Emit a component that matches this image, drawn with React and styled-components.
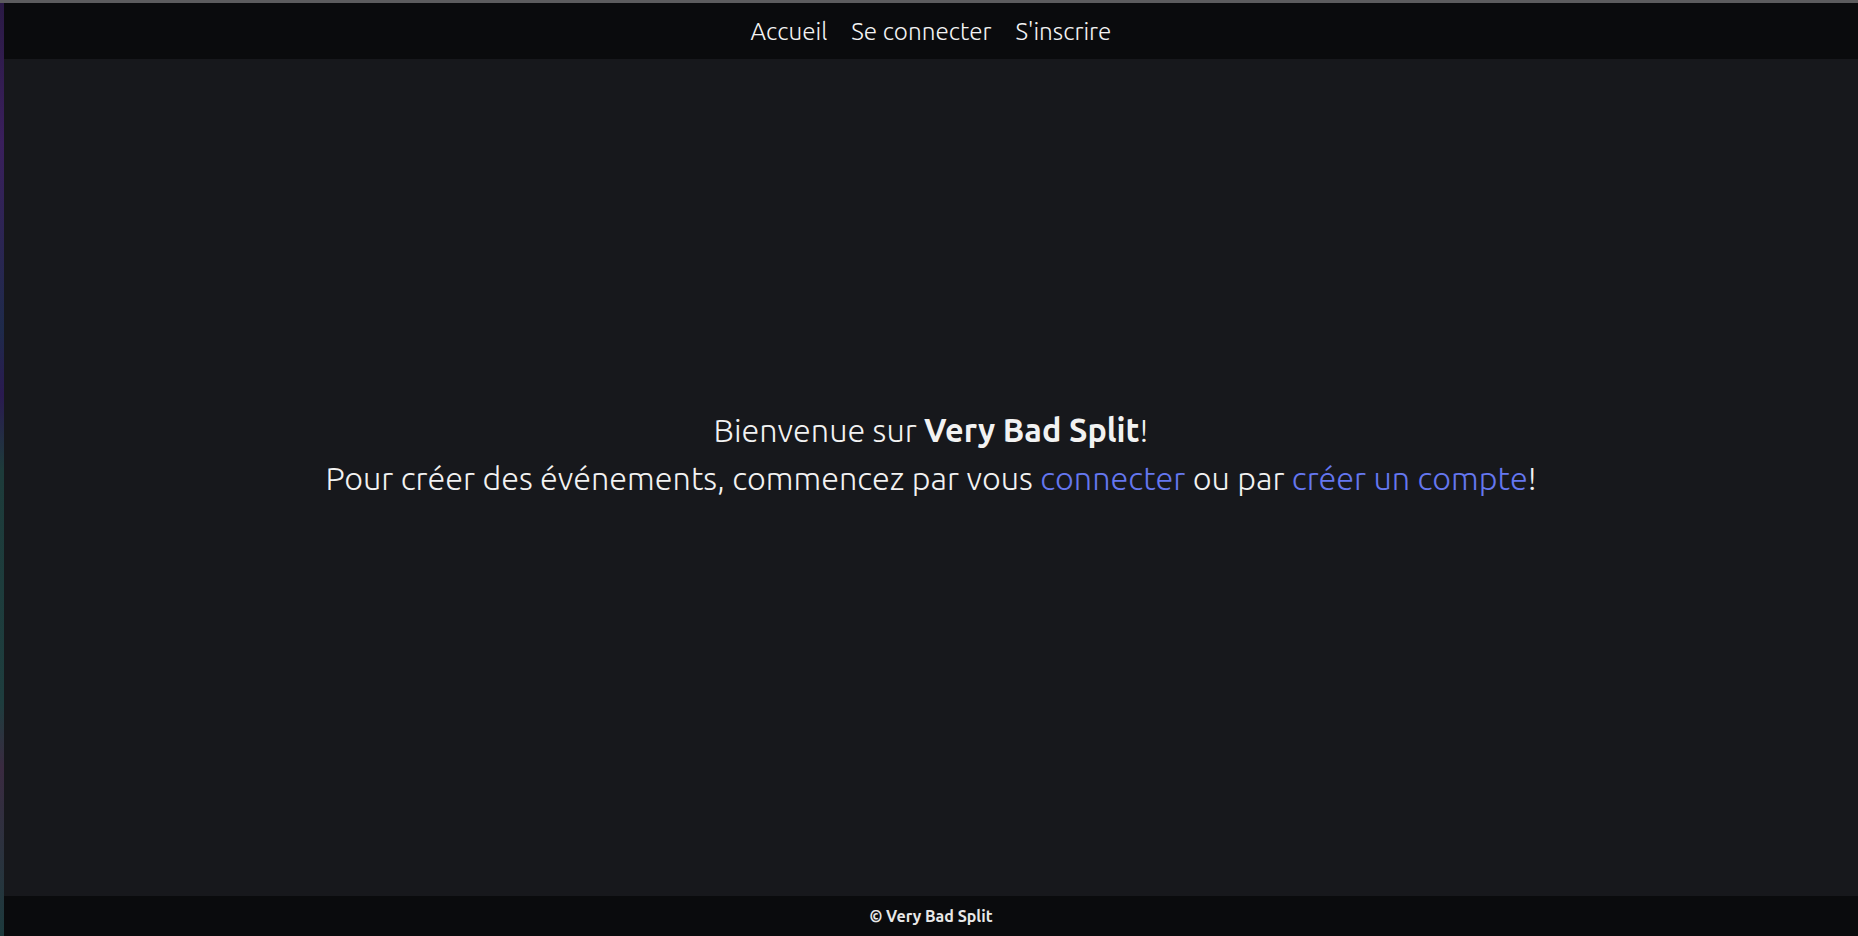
import styled, { createGlobalStyle } from "styled-components"

const Global = createGlobalStyle`
    html, body {
        margin: 0;
        padding: 0;
        height: 100%;
        background-color: #17181c;
    }
    #root {
        height: 100%;
    }
`

const Frame = styled.div`
    height: 936px;
    display: flex;
    flex-direction: column;
    border-top: 3px solid #5c5c5e;
    box-sizing: border-box;
    font-family: "Ubuntu", "Noto Sans", "Open Sans", sans-serif;
`

const Row = styled.div`
    flex: 1;
    display: flex;
    min-height: 0;
`

// strip of desktop wallpaper showing on the left edge
const Edge = styled.div`
    width: 4px;
    background: linear-gradient(#2a1a44 0%, #3a1f5c 15%, #1e2a4a 35%, #2a1a50 42%, #1d3b3a 50%, #1e3d3e 75%, #3a2a40 82%, #1c3a3c 100%);
`

const Page = styled.div`
    flex: 1;
    display: flex;
    flex-direction: column;
    background-color: #17181c;
    color: #f2f2f2;
`

const Nav = styled.nav`
    height: 56px;
    background-color: #0a0b0d;
    display: flex;
    justify-content: center;
    align-items: center;
    gap: 24px;
`

const NavLink = styled.a`
    color: #f4f4f4;
    font-size: 24.3px;
    font-weight: 300;
    text-decoration: none;
    cursor: pointer;
`

const Main = styled.main`
    flex: 1;
    display: flex;
    align-items: center;
    justify-content: center;
`

const Welcome = styled.div`
    text-align: center;
    font-size: 32.4px;
    font-weight: 300;
    line-height: 48px;
    margin-bottom: 48px;
`

const Strong = styled.b`
    font-weight: 700;
`

const Link = styled.a`
    color: #6577f0;
    text-decoration: none;
    cursor: pointer;
`

const Footer = styled.footer`
    height: 40px;
    background-color: #0a0b0d;
    display: flex;
    align-items: center;
    justify-content: center;
    font-size: 16px;
    font-weight: 700;
    color: #e8e8e8;
`

const App = () => {
    return (
        <Frame>
            <Global />
            <Row>
                <Edge />
                <Page>
                    <Nav>
                        <NavLink>Accueil</NavLink>
                        <NavLink>Se connecter</NavLink>
                        <NavLink>S'inscrire</NavLink>
                    </Nav>
                    <Main>
                        <Welcome>
                            Bienvenue sur <Strong>Very Bad Split</Strong>!<br />
                            Pour créer des événements, commencez par vous <Link>connecter</Link> ou par <Link>créer un compte</Link>!
                        </Welcome>
                    </Main>
                    <Footer>© Very Bad Split</Footer>
                </Page>
            </Row>
        </Frame>
    )
}

export default App
